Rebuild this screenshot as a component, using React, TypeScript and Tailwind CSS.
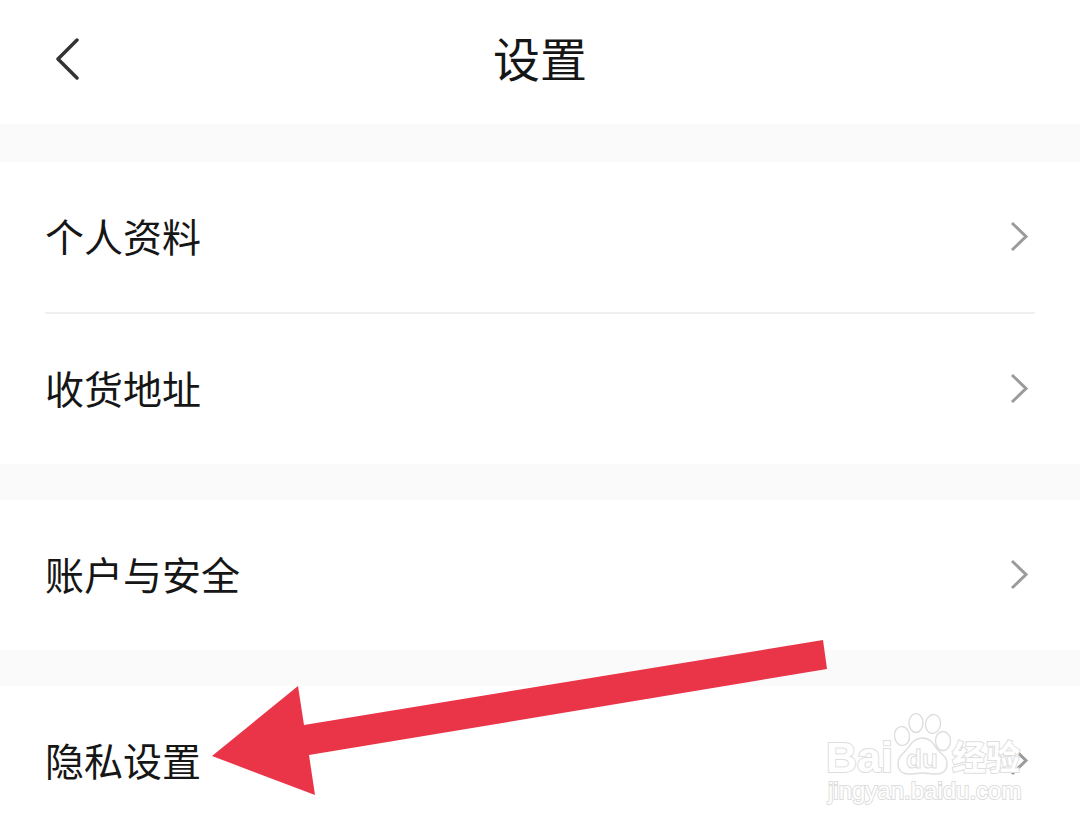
import React from 'react';

interface SettingsRowProps {
  label: string;
  children?: React.ReactNode;
}

const groups: string[][] = [['个人资料', '收货地址'], ['账户与安全']];

const ChevronRight: React.FC = () => (
  <svg width="24" height="36" viewBox="0 0 24 36" fill="none" aria-hidden="true">
    <path d="M6 4L20 17.500L6 31" stroke="#9b9b9b" strokeWidth="3" />
  </svg>
);

const SettingsRow: React.FC<SettingsRowProps> = ({ label, children }) => (
  <li className="relative">
    <a href="#" className="flex h-[150px] items-center justify-between pr-[5px]">
      <span className="pb-1">{label}</span>
      <ChevronRight />
    </a>
    {children}
  </li>
);

const Arrow: React.FC = () => (
  <svg
    className="pointer-events-none absolute -top-12 left-[165px]"
    width="620"
    height="160"
    viewBox="0 0 620 160"
    aria-hidden="true"
  >
    <polygon points="2,118 88,48 94,87 613,2 617,31 99,117 105,157" fill="#ea3549" />
  </svg>
);

const Watermark: React.FC = () => (
  <svg
    className="pointer-events-none absolute top-5 right-0"
    width="220"
    height="104"
    viewBox="0 0 220 104"
    fill="#ffffff"
    stroke="#dedede"
    strokeWidth="1.400"
    role="img"
    aria-label="Baidu 经验"
  >
    <g
      fontFamily='"Liberation Sans", "Noto Sans CJK SC", sans-serif'
      fontWeight="700"
      strokeWidth="2"
      paintOrder="stroke"
    >
      <text x="11" y="66" fontSize="43">Bai</text>
      <text x="137" y="64" fontSize="34">经验</text>
    </g>
    <ellipse cx="87" cy="30" rx="7.500" ry="9.500" transform="rotate(-8 87 30)" />
    <ellipse cx="101" cy="17" rx="7" ry="9.500" />
    <ellipse cx="118" cy="18" rx="7.500" ry="9.500" transform="rotate(10 118 18)" />
    <ellipse cx="128" cy="35" rx="7.500" ry="9.500" />
    <path d="M107 32C99 32 96 38 92 43C87 49 83 51 83 58C83 65 88 68 94 68C99 68 103 67 107.500 67C112 67 116 68 121 68C127 68 132 65 132 58C132 50 127 49 122 43C118 37 115 32 107 32Z" />
    <text x="91" y="62" fontSize="26" strokeWidth="1" fontWeight="700" fontFamily='"Liberation Sans", sans-serif'>
      du
    </text>
    <text
      x="13"
      y="93"
      fontSize="24"
      strokeWidth="2"
      paintOrder="stroke"
      fontFamily='"Liberation Sans", sans-serif'
    >
      jingyan.baidu.com
    </text>
  </svg>
);

export default function App() {
  return (
    <div className="h-screen overflow-hidden bg-[#fafafa] font-['Noto_Sans_CJK_SC',sans-serif] text-[39px] leading-none text-[#161616]">
      <header className="grid h-[124px] grid-cols-3 items-center bg-white px-12">
        <button type="button" aria-label="返回" className="justify-self-start">
          <svg width="36" height="48" viewBox="0 0 36 48" fill="none" aria-hidden="true">
            <path
              d="M29 2L10 21L29 40"
              stroke="#333333"
              strokeWidth="3.500"
              strokeLinecap="round"
              strokeLinejoin="round"
            />
          </svg>
        </button>
        <h1 className="pb-3 text-center text-[47px] leading-none">设置</h1>
      </header>
      <main className="flex flex-col gap-9 pt-[38px]">
        {groups.map((rows) => (
          <ul key={rows[0]} className="divide-y-2 divide-[#f0f0f0] bg-white px-[45px]">
            {rows.map((label) => (
              <SettingsRow key={label} label={label} />
            ))}
          </ul>
        ))}
        <ul className="bg-white px-[45px]">
          <SettingsRow label="隐私设置">
            <Arrow />
            <Watermark />
          </SettingsRow>
        </ul>
      </main>
    </div>
  );
}
